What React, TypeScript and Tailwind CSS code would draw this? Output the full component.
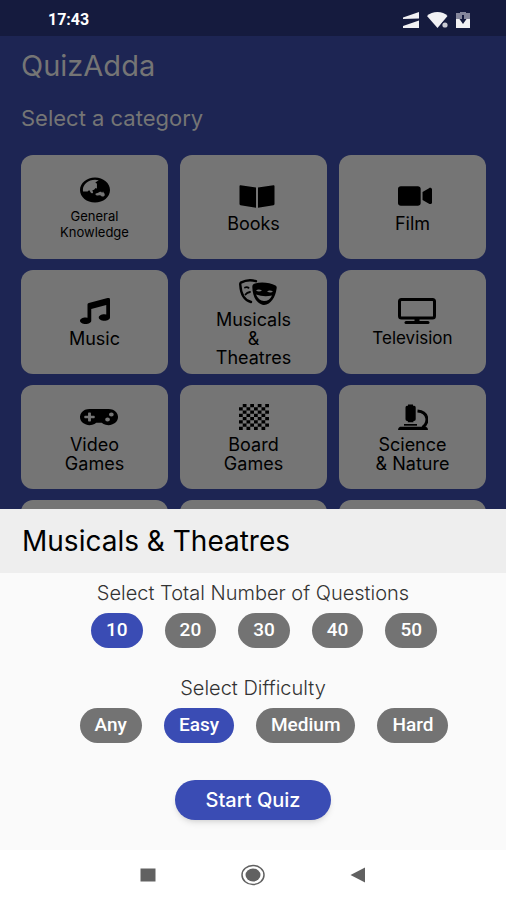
import { useState } from "react";
import type { ComponentType, SVGProps } from "react";
import {
  FaChessBoard,
  FaGamepad,
  FaGlobeAsia,
  FaMusic,
  FaVideo,
} from "react-icons/fa";

const BookIcon = (props: SVGProps<SVGSVGElement>) => (
  <svg viewBox="0 0 36 26" fill="currentColor" {...props}>
    <path d="M1.500 2.200 17 4.600V24.800L1.500 22.200Q.5 22 .5 21V3.200Q.5 2 1.500 2.200zM34.500 2.200 19 4.600V24.800L34.500 22.200Q35.500 22 35.500 21V3.200Q35.500 2 34.500 2.200z" />
  </svg>
);

const MasksIcon = (props: SVGProps<SVGSVGElement>) => (
  <svg viewBox="0 0 38 26" fill="none" {...props}>
    <path
      d="M17 2.200C12 .6 6 1.400 1.800 3.600 1 4.200 1.200 5 1.300 6 1.800 14 4 21 12 23"
      stroke="currentColor"
      strokeWidth="2.400"
      strokeLinecap="round"
    />
    <path
      d="M6 8.500q2-1 3.500.3M6.500 15.500q1.500-2 4.500-2.500"
      stroke="currentColor"
      strokeWidth="1.800"
      strokeLinecap="round"
    />
    <path
      fill="currentColor"
      fillRule="evenodd"
      d="M16 4.500C22 2.500 31 3.500 36.500 6.500 38 7.500 37.800 8.500 37.500 10 36.500 18 32 25.500 25 26 18 25.500 13.500 18 13.300 8 13.300 6 14 5.200 16 4.500zM17 11.500Q19.500 9.500 23 11.500 20 13.500 17 11.500zM28 12.200Q31.500 10.500 34 12.800 31 14.500 28 12.200zM17 15.500Q25 18.500 33 16.500 30.500 22 25 22 19.500 21.500 17 15.500z"
    />
  </svg>
);

const TvIcon = (props: SVGProps<SVGSVGElement>) => (
  <svg viewBox="0 0 38 26" fill="none" {...props}>
    <rect x="1.500" y="1.500" width="35" height="18.500" rx="2" stroke="currentColor" strokeWidth="3" />
    <path d="M16.500 20h5v3.500h-5z" fill="currentColor" />
    <rect x="6.500" y="23" width="25" height="3" rx="1.500" fill="currentColor" />
  </svg>
);

const MicroscopeIcon = (props: SVGProps<SVGSVGElement>) => (
  <svg viewBox="0 0 30 26" fill="currentColor" {...props}>
    <path d="M10 .5h5v1.300h1.200q1.500.3 1.500 1.700v11.800q0 1.700-1.700 1.700h-.6v1.200H9.800V17h-.6q-1.700 0-1.700-1.700V3.500q0-1.400 1.500-1.700h1z" />
    <path d="M6 20h13v1.700H6z" />
    <path d="M19.500 7C31 8 31 19 24.500 23.500" fill="none" stroke="currentColor" strokeWidth="3" />
    <path d="M2 22.800h26q2 .8 2 3.200H0q0-2.400 2-3.200z" />
  </svg>
);

interface Category {
  name: string;
  lines: string[];
  icon?: ComponentType<SVGProps<SVGSVGElement>>;
  iconClass?: string;
  textClass?: string;
}

const categories: Category[] = [
  {
    name: "General Knowledge",
    lines: ["General", "Knowledge"],
    icon: FaGlobeAsia,
    iconClass: "w-[30px]",
    textClass: "text-[13px] leading-4",
  },
  { name: "Books", lines: ["Books"], icon: BookIcon, iconClass: "w-9" },
  { name: "Film", lines: ["Film"], icon: FaVideo, iconClass: "w-[34px]" },
  { name: "Music", lines: ["Music"], icon: FaMusic, iconClass: "w-[30px]" },
  {
    name: "Musicals & Theatres",
    lines: ["Musicals", "&", "Theatres"],
    icon: MasksIcon,
    iconClass: "w-[38px]",
  },
  {
    name: "Television",
    lines: ["Television"],
    icon: TvIcon,
    iconClass: "w-[38px]",
    textClass: "text-[17px] leading-[19px]",
  },
  {
    name: "Video Games",
    lines: ["Video", "Games"],
    icon: FaGamepad,
    iconClass: "w-[38px]",
  },
  {
    name: "Board Games",
    lines: ["Board", "Games"],
    icon: FaChessBoard,
    iconClass: "w-[30px]",
  },
  {
    name: "Science & Nature",
    lines: ["Science", "& Nature"],
    icon: MicroscopeIcon,
    iconClass: "w-[30px]",
  },
  { name: "Computers", lines: [] },
  { name: "Mathematics", lines: [] },
  { name: "Mythology", lines: [] },
];

const questionCounts = ["10", "20", "30", "40", "50"];
const difficulties = ["Any", "Easy", "Medium", "Hard"];

const StatusBar = () => (
  <div className="flex h-9 shrink-0 items-center justify-between bg-[#151b3e] pr-9 pl-12 pt-1 text-white">
    <span className="font-['Roboto',sans-serif] text-base font-bold">
      17:43
    </span>
    <div className="flex items-center gap-2">
      {/* Signal */}
      <svg viewBox="0 0 16 16" className="h-4 w-4" fill="#f1f1f4">
        <path d="M0 7V5.500L16 0v6.500zM0 16v-2L16 8.500V16z" />
      </svg>
      {/* Wifi */}
      <svg viewBox="0 0 21 16" className="h-4 w-[21px]" fill="#f1f1f4">
        <path d="M0 4C5-1.300 16-1.300 20.500 4L10.500 16z" />
        <circle cx="18" cy="13" r="3.600" fill="#151b3e" />
        <circle cx="18" cy="13" r="2.600" fill="#c9cad3" />
      </svg>
      {/* Battery */}
      <svg viewBox="0 0 14 16" className="h-4 w-3.5">
        <path d="M4 0h6v1h4v6H0V1h4z" fill="#85879c" />
        <path d="M0 7h14v9H0z" fill="#f1f1f4" />
        <path d="M6 3h2v4h2.500L7 12 3.500 7H6z" fill="#151b3e" />
      </svg>
    </div>
  </div>
);

const CategoryCard = ({ category }: { category: Category }) => {
  const Icon = category.icon;
  return (
    <button
      aria-label={category.name}
      className="flex h-[104px] flex-col items-center justify-center gap-[5px] rounded-xl bg-[#757575] pt-0.5 text-black"
    >
      {Icon && (
        <span className="flex w-[30px]">
          <Icon
            preserveAspectRatio="none"
            className={`h-[26px] shrink-0 ${category.iconClass}`}
          />
        </span>
      )}
      <span className={category.textClass ?? "text-[18px] leading-[19px]"}>
        {category.lines.map((line) => (
          <span key={line} className="block">
            {line}
          </span>
        ))}
      </span>
    </button>
  );
};

interface ChipProps {
  label: string;
  selected: boolean;
  onClick: () => void;
}

const Chip = ({ label, selected, onClick }: ChipProps) => (
  <button
    onClick={onClick}
    aria-pressed={selected}
    className={`h-[35px] rounded-full px-[15px] font-['Roboto',sans-serif] text-[19px] font-medium text-white ${
      selected ? "bg-[#3a4cb4]" : "bg-[#737373]"
    }`}
  >
    {label}
  </button>
);

const App = () => {
  const [count, setCount] = useState("10");
  const [difficulty, setDifficulty] = useState("Easy");

  return (
    <div className="flex h-screen flex-col bg-[#1d2553] font-['Inter',sans-serif]">
      <StatusBar />

      {/* Dimmed category list */}
      <main className="min-h-0 flex-1 overflow-hidden pr-5 pl-[21px]">
        <h1 className="pt-3 text-[29px] leading-9 text-[#757575]">QuizAdda</h1>
        <h2 className="pt-5 text-[22px] leading-7 text-[#757575]">
          Select a category
        </h2>
        <div className="grid grid-cols-3 gap-x-3 gap-y-[11px] pt-[23px]">
          {categories.map((category) => (
            <CategoryCard key={category.name} category={category} />
          ))}
        </div>
      </main>

      {/* Quiz options sheet */}
      <section className="shrink-0 bg-[#fafafa]">
        <h2 className="bg-[#eeeeee] px-[22px] py-4 text-[28px] leading-8 text-black">
          Musicals &amp; Theatres
        </h2>
        <div className="flex flex-col items-center pt-2 pb-[30px]">
          <h3 className="text-[20px] leading-6 font-light text-[#333333]">
            Select Total Number of Questions
          </h3>
          <div className="flex gap-[22px] pt-2 pl-[22px]">
            {questionCounts.map((value) => (
              <Chip
                key={value}
                label={value}
                selected={value === count}
                onClick={() => setCount(value)}
              />
            ))}
          </div>
          <h3 className="pt-7 text-[20px] leading-6 font-light text-[#333333]">
            Select Difficulty
          </h3>
          <div className="flex gap-[22px] pt-2 pl-[22px]">
            {difficulties.map((value) => (
              <Chip
                key={value}
                label={value}
                selected={value === difficulty}
                onClick={() => setDifficulty(value)}
              />
            ))}
          </div>
          <button className="mt-[37px] h-10 rounded-full bg-[#3a4cb4] px-[30px] text-[20px] font-medium text-white shadow-md">
            Start Quiz
          </button>
        </div>
      </section>

      {/* System navigation */}
      <nav className="flex h-[50px] shrink-0 items-center justify-center gap-[82px] bg-white">
        <button aria-label="Recent apps">
          <svg viewBox="0 0 22 22" className="size-[22px]">
            <path d="M3.500 4.500h15v13h-15z" fill="#616161" />
          </svg>
        </button>
        <button aria-label="Home">
          <svg viewBox="0 0 24 22" className="h-[22px] w-6" fill="none">
            <ellipse cx="12" cy="11" rx="11" ry="9.500" stroke="#616161" strokeWidth="1.500" />
            <ellipse cx="12" cy="11" rx="7.500" ry="6.500" fill="#616161" />
          </svg>
        </button>
        <button aria-label="Back">
          <svg viewBox="0 0 22 22" className="size-[22px]">
            <path d="M3.500 11 18 3.500v15z" fill="#616161" />
          </svg>
        </button>
      </nav>
    </div>
  );
};

export default App;
